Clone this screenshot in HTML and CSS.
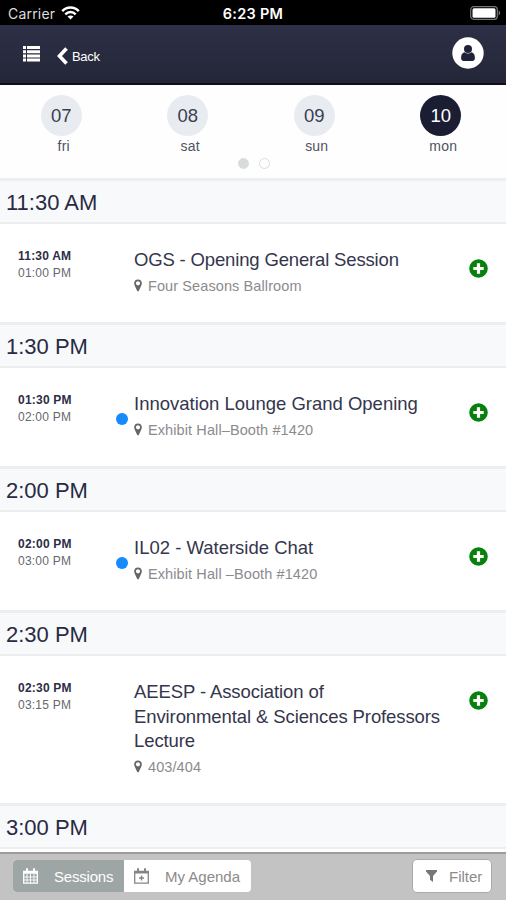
FILE: index.html
```html
<!DOCTYPE html>
<html lang="en">
<head>
<meta charset="utf-8">
<title>Sessions</title>
<link rel="stylesheet" href="styles.css">
</head>
<body>
<svg width="0" height="0" class="defs">
  <symbol id="pin" viewBox="0 0 8 13"><path fill-rule="evenodd" d="M4 .5a3.800 3.800 0 0 1 3.800 3.800c0 1-.2 1.600-.5 2.200L4.900 11.700Q4 13 3.100 11.700L.7 6.500C.4 5.900.2 5.300.2 4.300A3.800 3.800 0 0 1 4 .5ZM4 2.200a2.100 2.100 0 1 0 0 4.200a2.100 2.100 0 0 0 0-4.200Z"/></symbol>
  <symbol id="plus" viewBox="0 0 19 19"><circle cx="9.500" cy="9.500" r="9.300" fill="#08800c"/><path d="M9.500 4.300v10.400M4.300 9.500h10.400" stroke="#fff" stroke-width="3.200"/></symbol>
</svg>
<div class="screen">
  <div class="status">
    <div class="carrier">Carrier
      <svg width="19" height="14" viewBox="0 0 19 14" fill="none" stroke="#fff" stroke-width="2.500"><path d="M1.200 5.200C6 .3 13 .3 17.800 5.200M4.300 8.300c3-3 7.400-3 10.400 0"/><path d="M9.500 13.500 6.500 10.500c1.700-1.500 4.300-1.500 6 0Z" fill="#fff" stroke="none"/></svg>
    </div>
    <div class="clock">6:23 PM</div>
    <svg class="battery" width="31" height="14" viewBox="0 0 31 14"><rect x=".7" y=".7" width="26.600" height="12.600" rx="3" fill="none" stroke="#777" stroke-width="1.200"/><rect x="2.500" y="2.300" width="23" height="9.400" rx="1.500" fill="#fff"/><path d="M28.700 4.500c2 1 2 4 0 5Z" fill="#777"/></svg>
  </div>
  <header class="nav">
    <svg class="menu" width="17" height="16" viewBox="0 0 17 16" fill="#fff"><path d="M0 0h3v3H0zM4 0h13v3H4zM0 4.200h3v3H0zM4 4.200h13v3H4zM0 8.400h3v3H0zM4 8.400h13v3H4zM0 12.600h3v3H0zM4 12.600h13v3H4z"/></svg>
    <svg class="chev" width="11" height="18" viewBox="0 0 11 18" fill="none" stroke="#fff" stroke-width="3.600"><path d="M9.500 1.500 2.500 9l7 7.500"/></svg>
    <span class="back">Back</span>
    <svg class="user" width="32" height="32" viewBox="0 0 32 32"><circle cx="16" cy="16" r="15.700" fill="#fff"/><g fill="#1f2238"><circle cx="16" cy="12" r="4"/><path d="M12.600 15.300c2 1.700 4.800 1.700 6.800 0 2.600.4 3.500 2.700 3.500 5.700 0 1.800-1 3-2.600 3h-8.600C10.100 24 9.100 22.800 9.100 21c0-3 .9-5.300 3.500-5.700Z"/></g></svg>
  </header>
  <section class="days">
    <div class="dayrow">
      <div class="day"><b>07</b><span>fri</span></div>
      <div class="day"><b>08</b><span>sat</span></div>
      <div class="day"><b>09</b><span>sun</span></div>
      <div class="day active"><b>10</b><span>mon</span></div>
    </div>
    <div class="dots"><i class="on"></i><i></i></div>
  </section>
  <main>
    <h2>11:30 AM</h2>
    <article>
      <div class="times"><strong>11:30 AM</strong><span>01:00 PM</span></div>
      <div class="mark"></div>
      <div class="info"><h3 class="tight">OGS - Opening General Session</h3><p><svg><use href="#pin"/></svg><span>Four Seasons Ballroom</span></p></div>
      <svg class="add"><use href="#plus"/></svg>
    </article>
    <h2>1:30 PM</h2>
    <article>
      <div class="times"><strong>01:30 PM</strong><span>02:00 PM</span></div>
      <div class="mark blue"></div>
      <div class="info"><h3>Innovation Lounge Grand Opening</h3><p><svg><use href="#pin"/></svg><span>Exhibit Hall–Booth #1420</span></p></div>
      <svg class="add"><use href="#plus"/></svg>
    </article>
    <h2>2:00 PM</h2>
    <article>
      <div class="times"><strong>02:00 PM</strong><span>03:00 PM</span></div>
      <div class="mark blue"></div>
      <div class="info"><h3>IL02 - Waterside Chat</h3><p><svg><use href="#pin"/></svg><span>Exhibit Hall –Booth #1420</span></p></div>
      <svg class="add"><use href="#plus"/></svg>
    </article>
    <h2>2:30 PM</h2>
    <article class="tall">
      <div class="times"><strong>02:30 PM</strong><span>03:15 PM</span></div>
      <div class="mark"></div>
      <div class="info"><h3 class="long">AEESP - Association of<br>Environmental &amp; Sciences Professors<br>Lecture</h3><p><svg><use href="#pin"/></svg><span>403/404</span></p></div>
      <svg class="add"><use href="#plus"/></svg>
    </article>
    <h2>3:00 PM</h2>
  </main>
  <footer>
    <div class="tabs">
      <div class="tab on"><svg width="15" height="16" viewBox="0 0 15 16" fill="none" stroke="#fff"><path d="M.7 3.500h13.600v11.700H.7z" stroke-width="1.300"/><path d="M.7 4.500h13.600" stroke-width="2.500"/><path d="M4 .3v4M11 .3v4" stroke-width="2"/><path d="M4 6v9M7.500 6v9M11 6v9M1 9h13M1 12h13" stroke-width=".9"/></svg><span>Sessions</span></div>
      <div class="tab"><svg width="15" height="16" viewBox="0 0 15 16" fill="none" stroke="#858585"><path d="M.7 3.500h13.600v11.700H.7z" stroke-width="1.300"/><path d="M.7 4.500h13.600" stroke-width="2"/><path d="M4 .3v4M11 .3v4" stroke-width="2"/><path d="M7.500 7.500v5M5 10h5" stroke-width="1.400"/></svg><span>My Agenda</span></div>
    </div>
    <div class="filter"><svg width="11" height="12" viewBox="0 0 11 12" fill="#777"><path d="M0 0h11v1.500L7 6v6L4 9.800V6L0 1.500Z"/></svg><span>Filter</span></div>
  </footer>
</div>
</body>
</html>
```
FILE: styles.css
```css
* { box-sizing: border-box; }
body { margin: 0; font-family: "Liberation Sans", Arial, sans-serif; color: #34364c; background: #fff; }
svg { display: block; flex: none; }
.defs { position: absolute; }
.screen { width: 506px; height: 900px; overflow: hidden; display: flex; flex-direction: column; }
.status { height: 25px; flex: none; background: #000; color: #fff; display: grid; grid-template-columns: 1fr auto 1fr; align-items: center; padding: 1px 5px 0 8px; font-family: Inter, sans-serif; }
.carrier { display: flex; align-items: center; gap: 6px; font-size: 14px; letter-spacing: .2px; color: #ddd; }
.clock { font-size: 14.500px; font-weight: 600; letter-spacing: .25px; margin-left: -3px; }
.battery { justify-self: end; }
.nav { height: 60px; flex: none; background: linear-gradient(#2d3046, #242638); border-bottom: 2px solid #0d0f1c; display: flex; align-items: center; padding: 0 22px 0 23px; color: #fff; }
.chev { margin: 3px 4px 0 17px; }
.back { font-size: 13px; margin-top: 4px; letter-spacing: -.3px; }
.user { margin: -2px 0 0 auto; }
.days { height: 93px; flex: none; padding-top: 10px; background: #fefefe; }
.dayrow { display: flex; }
.day { width: 126.500px; display: flex; flex-direction: column; align-items: center; padding-right: 4px; }
.day b { width: 41px; height: 41px; border-radius: 50%; background: #e8ecf1; font-size: 18.500px; font-weight: 400; display: flex; align-items: center; justify-content: center; color: #3c3e52; }
.day span { font-size: 14px; line-height: 16px; margin: 2px 0 0 5px; color: #505260; letter-spacing: .2px; }
.day.active b { background: #1b1d33; color: #fff; }
.dots { display: flex; justify-content: center; gap: 10px; margin-top: 4px; padding-left: 2px; }
.dots i { width: 11px; height: 11px; border: 1px solid #ddd; border-radius: 50%; }
.dots .on { background: #d8dbdb; }
main { flex: 1; min-height: 0; overflow: hidden; }
h2 { height: 46px; margin: 0; padding-left: 6px; font-size: 22px; font-weight: 400; line-height: 44px; background: #f7f9fb; border-top: 3px solid #eceef0; border-bottom: 2px solid #ebedef; color: #292a43; }
article { height: 98px; display: flex; align-items: flex-start; padding: 23px 18px 0 18px; }
article.tall { height: 147px; }
.times { width: 98px; flex: none; font-size: 12px; line-height: 17px; padding-top: 1px; letter-spacing: .22px; }
.times strong, .times span { display: block; }
.times strong { color: #2c2e46; }
.times span { color: #66676d; }
.mark { width: 18px; height: 12px; flex: none; margin-top: 22px; }
.mark::before { content: ""; display: block; width: 12px; height: 12px; border-radius: 50%; }
.blue::before { background: #168aff; }
.info { flex: 1; }
h3 { margin: 1px 0 0; font-size: 18.500px; line-height: 24.500px; font-weight: 400; white-space: nowrap; }
.tight { letter-spacing: -.16px; }
.long { letter-spacing: -.1px; }
p { margin: 2px 0 0; display: flex; align-items: center; font-size: 14.500px; line-height: 22px; color: #8b8b8f; letter-spacing: .1px; }
p svg { width: 8px; height: 13px; margin-right: 6px; fill: #666; }
.add { width: 19px; height: 19px; margin-top: 12px; }
footer { height: 48px; flex: none; background: #c3c3c3; border-top: 2px solid #9c9c9c; display: flex; justify-content: space-between; align-items: flex-start; padding: 5px 14px 0 13px; font-size: 15px; color: #8b8b8b; }
.tabs { display: flex; margin-top: 1px; border-radius: 4px; overflow: hidden; background: #fff; height: 32px; }
.tab { width: 127px; display: flex; align-items: center; padding-left: 10px; gap: 16px; }
.tab.on { width: 111px; background: #9da6a4; color: #fff; letter-spacing: -.2px; }
.filter { width: 80px; height: 34px; border: 1px solid #aaa; border-radius: 5px; background: #fff; display: flex; align-items: center; gap: 12px; padding-left: 13px; }
```
